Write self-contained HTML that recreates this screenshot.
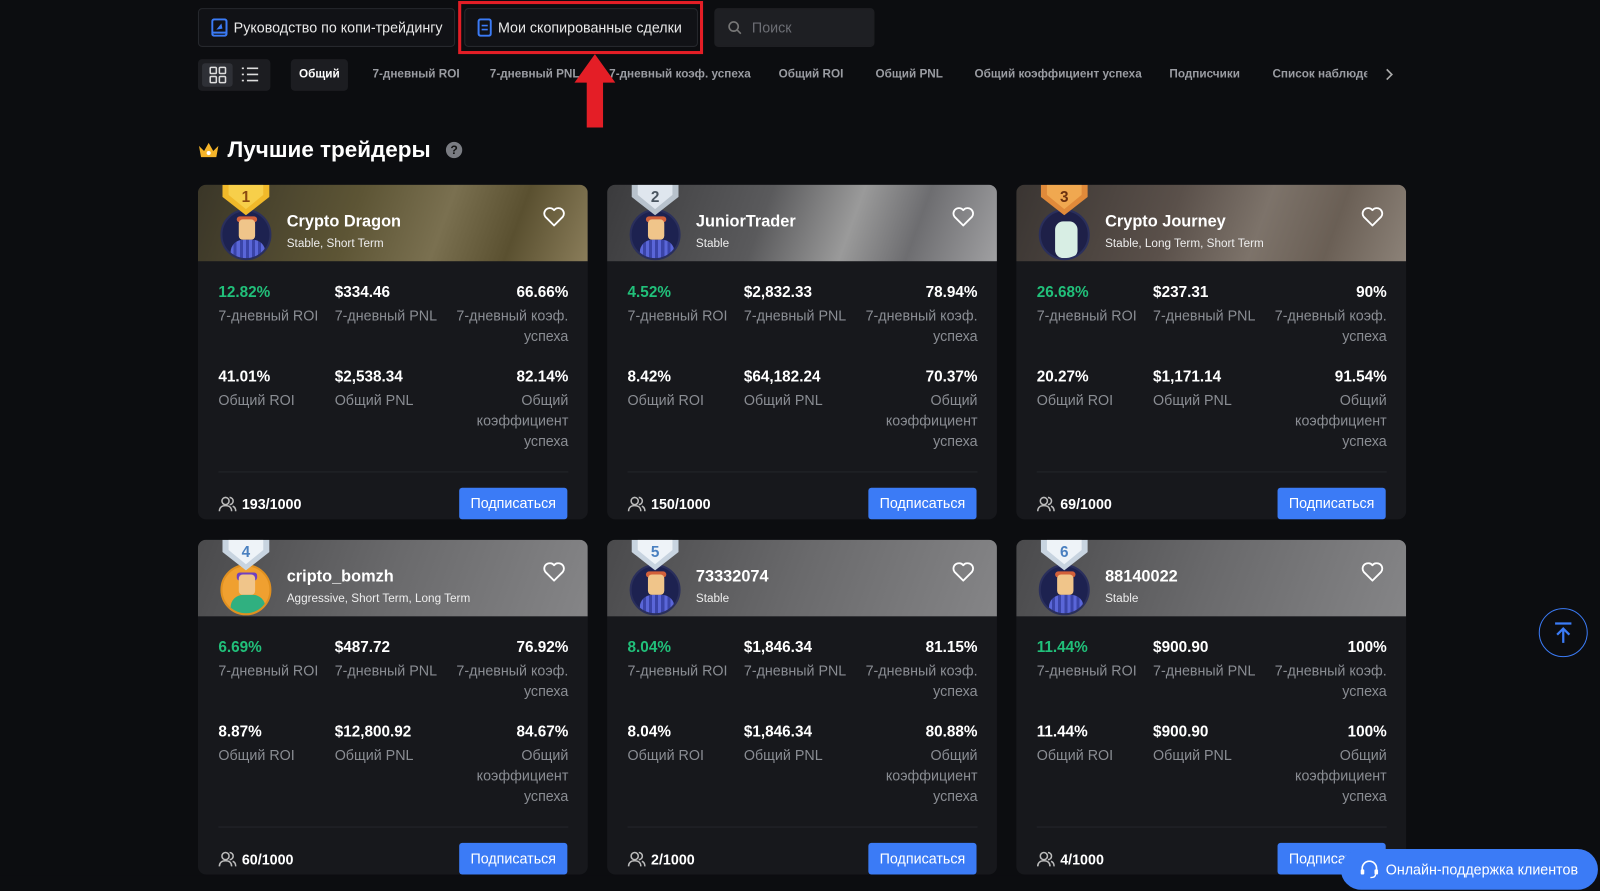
<!DOCTYPE html>
<html><head><meta charset="utf-8">
<style>
*{box-sizing:border-box;margin:0;padding:0}
body{width:1600px;height:891px;overflow:hidden;background:#0c0d10;font-family:"Liberation Sans",sans-serif;color:#fff;position:relative}
#w{position:absolute;left:0;top:0;width:1568px;height:873px;transform:scale(1.0204);transform-origin:0 0}
.abs{position:absolute}
.topbtn{position:absolute;top:8px;height:38px;border:1px solid #26282d;border-radius:4px;background:#111216;font-size:14px;color:#e8e8e8;display:flex;align-items:center;padding-left:12px;gap:6px}
.tab{position:absolute;top:58px;height:31px;line-height:31px;font-size:11.5px;color:#9a9ca2;font-weight:bold;white-space:nowrap}
.card{position:absolute;width:382px;height:328px;background:#17181c;border-radius:8px;overflow:hidden}
.hd{position:absolute;left:0;top:0;width:382px;height:75px}
.g1{background:linear-gradient(110deg,#3a3628 0%,#5d5535 40%,#7a7050 62%,#5a5030 80%,#8a7d5a 100%)}
.g2{background:linear-gradient(110deg,#3b3b3d 0%,#5a5a5c 40%,#9a9a9a 62%,#6d6d70 78%,#a0a0a2 100%)}
.g3{background:linear-gradient(110deg,#3a3532 0%,#5a504a 40%,#7d736a 62%,#6a5f55 80%,#8c8278 100%)}
.g4{background:linear-gradient(110deg,#4a4a4c 0%,#6a6a6c 50%,#858587 100%)}
.av{position:absolute;left:22px;top:24px;width:50px;height:50px;border-radius:50%;background:#1d2250;border:2px solid #2a2f5c;overflow:hidden}
.av .face{position:absolute;left:16px;top:8px;width:16px;height:20px;background:#f0c58a;border-radius:4px}
.av .hair{position:absolute;left:14px;top:5px;width:20px;height:6px;background:#d2603a;border-radius:3px}
.av .body{position:absolute;left:8px;top:28px;width:34px;height:24px;background:repeating-linear-gradient(90deg,#5a66d8 0 3px,#3a44a8 3px 6px);border-radius:12px 12px 0 0}
.medal{position:absolute;left:24px;top:0;width:46px;height:30px}
.nm{position:absolute;left:87px;top:28px;font-size:16px;font-weight:bold;color:#fff}
.tg{position:absolute;left:87px;top:52px;font-size:11.5px;color:#eee}
.heart{position:absolute;left:338px;top:22px}
.v{position:absolute;font-size:15px;font-weight:bold}
.l{position:absolute;font-size:14px;color:#8a8d93;line-height:20px}
.r{text-align:right;right:19px}
.gr{color:#21c07a}
.dv{position:absolute;left:20px;top:281px;width:343px;height:1px;background:#24262b}
.cnt{position:absolute;left:20px;top:305px;font-size:14px;font-weight:bold;display:flex;align-items:center;gap:5px}
.sub{position:absolute;left:256px;top:297px;width:106px;height:31px;background:#3b7bf6;border-radius:3px;font-size:14px;color:#fff;text-align:center;line-height:31px}
</style></head><body><div id="w">

<div class="topbtn" style="left:194px;width:252px">
<svg width="16" height="18" viewBox="0 0 16 18"><rect x="1" y="1" width="14" height="16" rx="2" fill="none" stroke="#3b7bf6" stroke-width="2"/><path d="M5 11 L10 5 L11 10 Z" fill="#3b7bf6"/><path d="M1 14h14" stroke="#3b7bf6" stroke-width="2"/></svg>
Руководство по копи-трейдингу</div>
<div class="topbtn" style="left:455px;width:229px">
<svg width="14" height="18" viewBox="0 0 14 18"><rect x="1" y="1" width="12" height="16" rx="2" fill="none" stroke="#3b7bf6" stroke-width="2"/><path d="M4 7h6M4 11h6" stroke="#3b7bf6" stroke-width="1.6"/></svg>
Мои скопированные сделки</div>
<div class="abs" style="left:449px;top:1px;width:240px;height:52px;border:3px solid #e41e26"></div>
<div class="topbtn" style="left:700px;width:157px;background:#1e1f23;border-color:#1e1f23;color:#6c6e74">
<svg width="14" height="14" viewBox="0 0 14 14"><circle cx="6" cy="6" r="4.5" fill="none" stroke="#777" stroke-width="1.6"/><path d="M9.5 9.5L13 13" stroke="#777" stroke-width="1.6"/></svg>
&nbsp;Поиск</div>

<div class="abs" style="left:194px;top:58px;width:71px;height:31px;background:#1c1d21;border-radius:4px"></div>
<div class="abs" style="left:198px;top:62px;width:30px;height:23px;background:#2e3036;border-radius:3px"></div>
<svg class="abs" style="left:205px;top:65px" width="17" height="17" viewBox="0 0 17 17"><g fill="none" stroke="#ddd" stroke-width="1.5"><rect x="1" y="1" width="6" height="6" rx="1"/><rect x="10" y="1" width="6" height="6" rx="1"/><rect x="1" y="10" width="6" height="6" rx="1"/><rect x="10" y="10" width="6" height="6" rx="1"/></g></svg>
<svg class="abs" style="left:236px;top:65px" width="18" height="16" viewBox="0 0 18 16"><g stroke="#ddd" stroke-width="1.6"><path d="M1 2h2M6 2h11M1 8h2M6 8h11M1 14h2M6 14h11"/></g></svg>

<div class="abs" style="left:285px;top:58px;width:56px;height:31px;background:#1c1d21;border-radius:4px"></div>
<div class="tab" style="left:293px;color:#fff">Общий</div>
<div class="tab" style="left:365px">7-дневный ROI</div>
<div class="tab" style="left:480px">7-дневный PNL</div>
<div class="tab" style="left:597px">7-дневный коэф. успеха</div>
<div class="tab" style="left:763px">Общий ROI</div>
<div class="tab" style="left:858px">Общий PNL</div>
<div class="tab" style="left:955px">Общий коэффициент успеха</div>
<div class="tab" style="left:1146px">Подписчики</div>
<div class="tab" style="left:1247px;width:93px;overflow:hidden">Список наблюдения</div>
<svg class="abs" style="left:1356px;top:67px" width="10" height="12" viewBox="0 0 10 12"><path d="M3 1l5 5-5 5" fill="none" stroke="#aaa" stroke-width="1.6"/></svg>

<svg class="abs" style="left:563px;top:53px" width="40" height="72" viewBox="0 0 40 72"><path d="M20 0 L40 28 H28 V72 H12 V28 H0 Z" fill="#e41e26"/></svg>

<svg class="abs" style="left:194px;top:138px" width="21" height="17" viewBox="0 0 21 17"><path d="M1 5 L6 10 L10.5 2 L15 10 L20 5 L18 16 H3 Z" fill="#f5b42a"/><circle cx="10.5" cy="12" r="2" fill="#fff"/></svg>
<div class="abs" style="left:223px;top:134px;font-size:22px;font-weight:bold">Лучшие трейдеры</div>
<div class="abs" style="left:437px;top:139px;width:16px;height:16px;border-radius:50%;background:#7a7c82;color:#111;font-size:12px;font-weight:bold;text-align:center;line-height:16px">?</div>

<div class="card" style="left:194px;top:181px">
<div class="hd g1"></div>
<div class="av"><div class="hair"></div><div class="face"></div><div class="body"></div></div>
<svg class="medal" viewBox="0 0 46 30"><path d="M0 0H46V12L23 30L0 12Z" fill="#f0b92a"/><path d="M6 0H40V10L23 24L6 10Z" fill="#f7cf4a"/><text x="23" y="17" font-size="15" font-weight="bold" text-anchor="middle" fill="#8a4b10" font-family="Liberation Sans">1</text></svg>
<div class="nm">Crypto Dragon</div><div class="tg">Stable, Short Term</div>
<svg class="heart" width="22" height="20" viewBox="0 0 22 20"><path d="M11 18 L2.5 9.5 A5 5 0 0 1 11 3 A5 5 0 0 1 19.5 9.5 Z" fill="none" stroke="#fff" stroke-width="1.8" stroke-linejoin="round"/></svg>
<div class="v gr" style="left:20px;top:97px">12.82%</div><div class="l" style="left:20px;top:118px">7-дневный ROI</div>
<div class="v" style="left:134px;top:97px">$334.46</div><div class="l" style="left:134px;top:118px">7-дневный PNL</div>
<div class="v r" style="top:97px">66.66%</div><div class="l r" style="top:118px">7-дневный коэф.<br>успеха</div>
<div class="v" style="left:20px;top:180px">41.01%</div><div class="l" style="left:20px;top:201px">Общий ROI</div>
<div class="v" style="left:134px;top:180px">$2,538.34</div><div class="l" style="left:134px;top:201px">Общий PNL</div>
<div class="v r" style="top:180px">82.14%</div><div class="l r" style="top:201px">Общий<br>коэффициент<br>успеха</div>
<div class="dv"></div>
<div class="cnt"><svg width="18" height="16" viewBox="0 0 18 16"><g fill="none" stroke="#bbb" stroke-width="1.5"><circle cx="7" cy="5" r="3.5"/><path d="M1 15c0-4 3-5.5 6-5.5s6 1.5 6 5.5"/><path d="M11 1.5a3.5 3.5 0 0 1 0 7M14 10c2 .7 3 2.3 3 5"/></g></svg>193/1000</div>
<div class="sub">Подписаться</div>
</div>

<div class="card" style="left:595px;top:181px">
<div class="hd g2"></div>
<div class="av"><div class="hair"></div><div class="face"></div><div class="body"></div></div>
<svg class="medal" viewBox="0 0 46 30"><path d="M0 0H46V12L23 30L0 12Z" fill="#b8c2cc"/><path d="M6 0H40V10L23 24L6 10Z" fill="#dfe6ee"/><text x="23" y="17" font-size="15" font-weight="bold" text-anchor="middle" fill="#4a5560" font-family="Liberation Sans">2</text></svg>
<div class="nm">JuniorTrader</div><div class="tg">Stable</div>
<svg class="heart" width="22" height="20" viewBox="0 0 22 20"><path d="M11 18 L2.5 9.5 A5 5 0 0 1 11 3 A5 5 0 0 1 19.5 9.5 Z" fill="none" stroke="#fff" stroke-width="1.8" stroke-linejoin="round"/></svg>
<div class="v gr" style="left:20px;top:97px">4.52%</div><div class="l" style="left:20px;top:118px">7-дневный ROI</div>
<div class="v" style="left:134px;top:97px">$2,832.33</div><div class="l" style="left:134px;top:118px">7-дневный PNL</div>
<div class="v r" style="top:97px">78.94%</div><div class="l r" style="top:118px">7-дневный коэф.<br>успеха</div>
<div class="v" style="left:20px;top:180px">8.42%</div><div class="l" style="left:20px;top:201px">Общий ROI</div>
<div class="v" style="left:134px;top:180px">$64,182.24</div><div class="l" style="left:134px;top:201px">Общий PNL</div>
<div class="v r" style="top:180px">70.37%</div><div class="l r" style="top:201px">Общий<br>коэффициент<br>успеха</div>
<div class="dv"></div>
<div class="cnt"><svg width="18" height="16" viewBox="0 0 18 16"><g fill="none" stroke="#bbb" stroke-width="1.5"><circle cx="7" cy="5" r="3.5"/><path d="M1 15c0-4 3-5.5 6-5.5s6 1.5 6 5.5"/><path d="M11 1.5a3.5 3.5 0 0 1 0 7M14 10c2 .7 3 2.3 3 5"/></g></svg>150/1000</div>
<div class="sub">Подписаться</div>
</div>

<div class="card" style="left:996px;top:181px">
<div class="hd g3"></div>
<div class="av" style="background:#1e2048"><div class="face" style="background:#d8eee4;left:14px;top:10px;width:22px;height:36px;border-radius:8px"></div></div>
<svg class="medal" viewBox="0 0 46 30"><path d="M0 0H46V12L23 30L0 12Z" fill="#e08a3a"/><path d="M6 0H40V10L23 24L6 10Z" fill="#f0a850"/><text x="23" y="17" font-size="15" font-weight="bold" text-anchor="middle" fill="#6a3010" font-family="Liberation Sans">3</text></svg>
<div class="nm">Crypto Journey</div><div class="tg">Stable, Long Term, Short Term</div>
<svg class="heart" width="22" height="20" viewBox="0 0 22 20"><path d="M11 18 L2.5 9.5 A5 5 0 0 1 11 3 A5 5 0 0 1 19.5 9.5 Z" fill="none" stroke="#fff" stroke-width="1.8" stroke-linejoin="round"/></svg>
<div class="v gr" style="left:20px;top:97px">26.68%</div><div class="l" style="left:20px;top:118px">7-дневный ROI</div>
<div class="v" style="left:134px;top:97px">$237.31</div><div class="l" style="left:134px;top:118px">7-дневный PNL</div>
<div class="v r" style="top:97px">90%</div><div class="l r" style="top:118px">7-дневный коэф.<br>успеха</div>
<div class="v" style="left:20px;top:180px">20.27%</div><div class="l" style="left:20px;top:201px">Общий ROI</div>
<div class="v" style="left:134px;top:180px">$1,171.14</div><div class="l" style="left:134px;top:201px">Общий PNL</div>
<div class="v r" style="top:180px">91.54%</div><div class="l r" style="top:201px">Общий<br>коэффициент<br>успеха</div>
<div class="dv"></div>
<div class="cnt"><svg width="18" height="16" viewBox="0 0 18 16"><g fill="none" stroke="#bbb" stroke-width="1.5"><circle cx="7" cy="5" r="3.5"/><path d="M1 15c0-4 3-5.5 6-5.5s6 1.5 6 5.5"/><path d="M11 1.5a3.5 3.5 0 0 1 0 7M14 10c2 .7 3 2.3 3 5"/></g></svg>69/1000</div>
<div class="sub">Подписаться</div>
</div>

<div class="card" style="left:194px;top:529px">
<div class="hd g4"></div>
<div class="av" style="background:#f0a030;border-color:#e09020"><div class="hair" style="background:#7040c0;top:6px;height:8px"></div><div class="face"></div><div class="body" style="background:#30b080"></div></div>
<svg class="medal" viewBox="0 0 46 30"><path d="M0 0H46V12L23 30L0 12Z" fill="#c8d4e0"/><path d="M6 0H40V10L23 24L6 10Z" fill="#eef3f8"/><text x="23" y="17" font-size="15" font-weight="bold" text-anchor="middle" fill="#4a80c0" font-family="Liberation Sans">4</text></svg>
<div class="nm">cripto_bomzh</div><div class="tg">Aggressive, Short Term, Long Term</div>
<svg class="heart" width="22" height="20" viewBox="0 0 22 20"><path d="M11 18 L2.5 9.5 A5 5 0 0 1 11 3 A5 5 0 0 1 19.5 9.5 Z" fill="none" stroke="#fff" stroke-width="1.8" stroke-linejoin="round"/></svg>
<div class="v gr" style="left:20px;top:97px">6.69%</div><div class="l" style="left:20px;top:118px">7-дневный ROI</div>
<div class="v" style="left:134px;top:97px">$487.72</div><div class="l" style="left:134px;top:118px">7-дневный PNL</div>
<div class="v r" style="top:97px">76.92%</div><div class="l r" style="top:118px">7-дневный коэф.<br>успеха</div>
<div class="v" style="left:20px;top:180px">8.87%</div><div class="l" style="left:20px;top:201px">Общий ROI</div>
<div class="v" style="left:134px;top:180px">$12,800.92</div><div class="l" style="left:134px;top:201px">Общий PNL</div>
<div class="v r" style="top:180px">84.67%</div><div class="l r" style="top:201px">Общий<br>коэффициент<br>успеха</div>
<div class="dv"></div>
<div class="cnt"><svg width="18" height="16" viewBox="0 0 18 16"><g fill="none" stroke="#bbb" stroke-width="1.5"><circle cx="7" cy="5" r="3.5"/><path d="M1 15c0-4 3-5.5 6-5.5s6 1.5 6 5.5"/><path d="M11 1.5a3.5 3.5 0 0 1 0 7M14 10c2 .7 3 2.3 3 5"/></g></svg>60/1000</div>
<div class="sub">Подписаться</div>
</div>

<div class="card" style="left:595px;top:529px">
<div class="hd g4"></div>
<div class="av"><div class="hair"></div><div class="face"></div><div class="body"></div></div>
<svg class="medal" viewBox="0 0 46 30"><path d="M0 0H46V12L23 30L0 12Z" fill="#c8d4e0"/><path d="M6 0H40V10L23 24L6 10Z" fill="#eef3f8"/><text x="23" y="17" font-size="15" font-weight="bold" text-anchor="middle" fill="#4a80c0" font-family="Liberation Sans">5</text></svg>
<div class="nm">73332074</div><div class="tg">Stable</div>
<svg class="heart" width="22" height="20" viewBox="0 0 22 20"><path d="M11 18 L2.5 9.5 A5 5 0 0 1 11 3 A5 5 0 0 1 19.5 9.5 Z" fill="none" stroke="#fff" stroke-width="1.8" stroke-linejoin="round"/></svg>
<div class="v gr" style="left:20px;top:97px">8.04%</div><div class="l" style="left:20px;top:118px">7-дневный ROI</div>
<div class="v" style="left:134px;top:97px">$1,846.34</div><div class="l" style="left:134px;top:118px">7-дневный PNL</div>
<div class="v r" style="top:97px">81.15%</div><div class="l r" style="top:118px">7-дневный коэф.<br>успеха</div>
<div class="v" style="left:20px;top:180px">8.04%</div><div class="l" style="left:20px;top:201px">Общий ROI</div>
<div class="v" style="left:134px;top:180px">$1,846.34</div><div class="l" style="left:134px;top:201px">Общий PNL</div>
<div class="v r" style="top:180px">80.88%</div><div class="l r" style="top:201px">Общий<br>коэффициент<br>успеха</div>
<div class="dv"></div>
<div class="cnt"><svg width="18" height="16" viewBox="0 0 18 16"><g fill="none" stroke="#bbb" stroke-width="1.5"><circle cx="7" cy="5" r="3.5"/><path d="M1 15c0-4 3-5.5 6-5.5s6 1.5 6 5.5"/><path d="M11 1.5a3.5 3.5 0 0 1 0 7M14 10c2 .7 3 2.3 3 5"/></g></svg>2/1000</div>
<div class="sub">Подписаться</div>
</div>

<div class="card" style="left:996px;top:529px">
<div class="hd g4"></div>
<div class="av"><div class="hair"></div><div class="face"></div><div class="body"></div></div>
<svg class="medal" viewBox="0 0 46 30"><path d="M0 0H46V12L23 30L0 12Z" fill="#c8d4e0"/><path d="M6 0H40V10L23 24L6 10Z" fill="#eef3f8"/><text x="23" y="17" font-size="15" font-weight="bold" text-anchor="middle" fill="#4a80c0" font-family="Liberation Sans">6</text></svg>
<div class="nm">88140022</div><div class="tg">Stable</div>
<svg class="heart" width="22" height="20" viewBox="0 0 22 20"><path d="M11 18 L2.5 9.5 A5 5 0 0 1 11 3 A5 5 0 0 1 19.5 9.5 Z" fill="none" stroke="#fff" stroke-width="1.8" stroke-linejoin="round"/></svg>
<div class="v gr" style="left:20px;top:97px">11.44%</div><div class="l" style="left:20px;top:118px">7-дневный ROI</div>
<div class="v" style="left:134px;top:97px">$900.90</div><div class="l" style="left:134px;top:118px">7-дневный PNL</div>
<div class="v r" style="top:97px">100%</div><div class="l r" style="top:118px">7-дневный коэф.<br>успеха</div>
<div class="v" style="left:20px;top:180px">11.44%</div><div class="l" style="left:20px;top:201px">Общий ROI</div>
<div class="v" style="left:134px;top:180px">$900.90</div><div class="l" style="left:134px;top:201px">Общий PNL</div>
<div class="v r" style="top:180px">100%</div><div class="l r" style="top:201px">Общий<br>коэффициент<br>успеха</div>
<div class="dv"></div>
<div class="cnt"><svg width="18" height="16" viewBox="0 0 18 16"><g fill="none" stroke="#bbb" stroke-width="1.5"><circle cx="7" cy="5" r="3.5"/><path d="M1 15c0-4 3-5.5 6-5.5s6 1.5 6 5.5"/><path d="M11 1.5a3.5 3.5 0 0 1 0 7M14 10c2 .7 3 2.3 3 5"/></g></svg>4/1000</div>
<div class="sub">Подписаться</div>
</div>

<div class="abs" style="left:1508px;top:596px;width:48px;height:48px;border-radius:50%;border:1.5px solid #3b7bf6"></div>
<svg class="abs" style="left:1522px;top:609px" width="20" height="22" viewBox="0 0 20 22"><path d="M2 2h16M10 21V7M4 13l6-6 6 6" fill="none" stroke="#3b7bf6" stroke-width="2.2"/></svg>

<div class="abs" style="left:0;top:858px;width:1568px;height:15px;background:#0c0d10"></div>
<div class="abs" style="left:1314px;top:832px;width:252px;height:40px;border-radius:20px;background:#3b7bf6;font-size:14px;color:#fff;line-height:40px;padding-left:44px;white-space:nowrap">Онлайн-поддержка клиентов</div>
<svg class="abs" style="left:1332px;top:843px" width="20" height="18" viewBox="0 0 20 18"><path d="M3 10V8a7 7 0 0 1 14 0v2" fill="none" stroke="#fff" stroke-width="1.6"/><rect x="1.5" y="9" width="3.5" height="5" rx="1" fill="#fff"/><rect x="15" y="9" width="3.5" height="5" rx="1" fill="#fff"/><path d="M16 14c0 2-2 3-5 3" fill="none" stroke="#fff" stroke-width="1.4"/></svg>
</div></body></html>
